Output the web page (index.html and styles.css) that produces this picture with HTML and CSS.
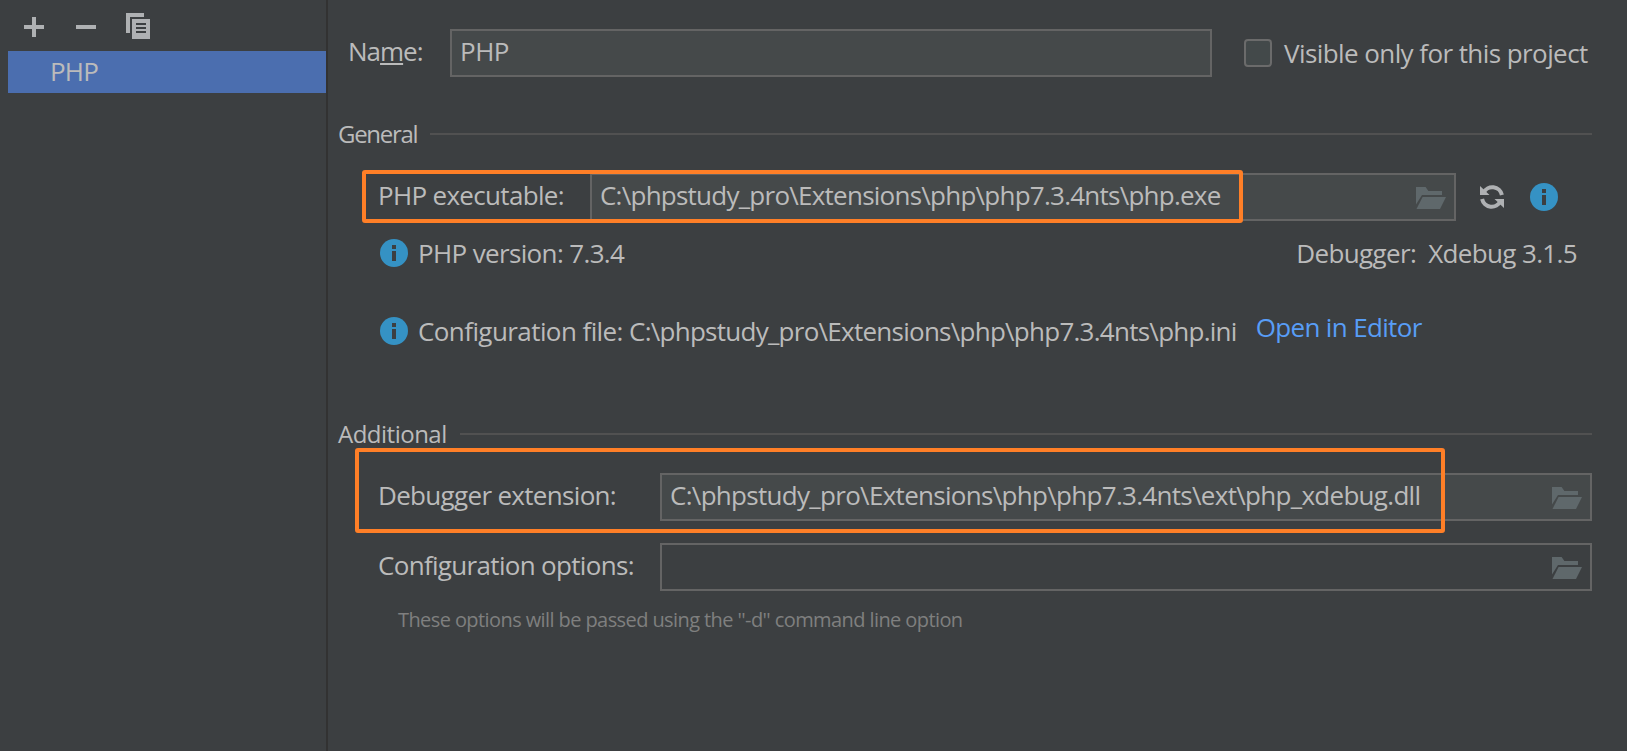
FILE: index.html
```html
<!DOCTYPE html>
<html lang="en">
<head>
<meta charset="utf-8">
<title>CLI Interpreters</title>
<link rel="stylesheet" href="styles.css">
</head>
<body>
<svg class="defs" aria-hidden="true">
  <symbol id="folder" viewBox="0 0 30 22"><path d="M0 0H9.600L12.400 4H26V8H6L0 17.500Z"/><path d="M6.600 10H30L24 22H0.500Z"/></symbol>
  <symbol id="info" viewBox="0 0 28 28"><circle cx="14" cy="14" r="14" fill="#3592c4"/><path d="M12 6h4v4h-4zM12 12h4v10h-4z" fill="#3c3f41"/></symbol>
</svg>
<div class="window">
  <aside class="sidebar">
    <div class="toolbar">
      <svg class="tool add" viewBox="0 0 20 20"><path d="M8 0h4v8h8v4h-8v8H8v-8H0V8h8z"/></svg>
      <svg class="tool remove" viewBox="0 0 20 20"><path d="M0 8h20v4H0z"/></svg>
      <svg class="tool copy" viewBox="0 0 24 26"><path d="M0 0h18v4H4v16H0z"/><path fill-rule="evenodd" d="M6 6h18v20H6zM10 10v2h10v-2zM10 14v2h10v-2zM10 18v2h10v-2z"/></svg>
    </div>
    <div class="item">PHP</div>
  </aside>
  <main class="main">
    <div class="row name-row">
      <label class="label name-label">Na<span class="mnemonic">m</span>e:</label>
      <div class="field name-field">PHP</div>
      <span class="checkbox"></span>
      <span class="label check-label">Visible only for this project</span>
    </div>
    <div class="section general"><span>General</span><i class="rule"></i></div>
    <div class="row exe-row">
      <label class="label exe-label">PHP executable:</label>
      <div class="field exe-field">C:\phpstudy_pro\Extensions\php\php7.3.4nts\php.exe<svg class="folder"><use href="#folder"/></svg></div>
      <svg class="refresh" viewBox="0 0 24 24"><path d="M3.500 7.800A9.800 9.800 0 0 1 21.900 10M20.500 16.200A9.800 9.800 0 0 1 2.100 14" fill="none" stroke="#afb1b3" stroke-width="4"/><path d="M0 1V10H9.500ZM24 23V14H14.500Z"/></svg>
      <svg class="info"><use href="#info"/></svg>
      <div class="highlight exe-highlight"></div>
    </div>
    <div class="row version-row">
      <svg class="info"><use href="#info"/></svg>
      <span class="status">PHP version: 7.3.4</span>
      <span class="debugger">Debugger:</span>
      <span class="xdebug">Xdebug 3.1.5</span>
    </div>
    <div class="row config-row">
      <svg class="info"><use href="#info"/></svg>
      <span class="status config"><span class="config-name">Configuration file: </span>C:\phpstudy_pro\Extensions\php\php7.3.4nts\php.ini</span>
      <a class="link">Open in Editor</a>
    </div>
    <div class="section additional"><span>Additional</span><i class="rule"></i></div>
    <div class="row ext-row">
      <label class="label wide-label">Debugger extension:</label>
      <div class="field wide-field">C:\phpstudy_pro\Extensions\php\php7.3.4nts\ext\php_xdebug.dll<svg class="folder"><use href="#folder"/></svg></div>
      <div class="highlight ext-highlight"></div>
    </div>
    <div class="row options-row">
      <label class="label wide-label">Configuration options:</label>
      <div class="field wide-field empty"><svg class="folder"><use href="#folder"/></svg></div>
    </div>
    <p class="hint">These options will be passed using the ''-d'' command line option</p>
  </main>
</div>
</body>
</html>
```
FILE: styles.css
```css
* { box-sizing: border-box; }
body { margin: 0; background: #3c3f41; color: #bbbbbb; font: 26px/36px "Open Sans", "Noto Sans", sans-serif; white-space: nowrap; }
svg { display: block; flex: none; fill: #afb1b3; }
.defs { display: none; }
.window { display: flex; width: 1627px; height: 751px; overflow: hidden; }

.sidebar { width: 328px; flex: none; border-right: 2px solid #323232; }
.toolbar { display: flex; height: 51px; padding: 13px 0 0 24px; align-items: flex-start; }
.tool { width: 20px; height: 20px; margin-top: 4px; }
.remove { margin-left: 32px; }
.copy { width: 24px; height: 26px; margin: 0 0 0 30px; }
.item { height: 42px; margin-left: 8px; padding: 2px 0 0 42px; background: #4b6eaf; letter-spacing: -0.8px; }

.main { flex: 1; min-width: 0; display: flex; flex-direction: column; padding: 29px 35px 0 10px; }
.row { display: flex; position: relative; flex: none; height: 48px; }
.label { flex: none; padding-top: 4px; letter-spacing: -0.68px; }
.field { display: flex; flex: none; height: 48px; padding: 2px 8px 0 8px; border: 2px solid #646464; background: #45494a; letter-spacing: -0.7px; }
.empty { background: none; }
.folder { width: 30px; height: 22px; margin: 10px 0 0 auto; fill: #5f686b; }
.info { width: 28px; height: 28px; }

.name-label { width: 112px; padding-left: 10px; letter-spacing: -1px; }
.name-field { width: 762px; letter-spacing: -0.5px; }
.mnemonic { text-decoration: underline 2px; text-underline-offset: 2px; text-decoration-skip-ink: none; }
.checkbox { flex: none; width: 28px; height: 28px; margin: 10px 12px 0 32px; border: 2px solid #6b6b6b; border-radius: 4px; background: #43494a; }
.check-label { padding-top: 6px; letter-spacing: -0.58px; }

.section { display: flex; flex: none; height: 36px; font-size: 24px; }
.rule { flex: 1; height: 2px; margin-top: 17px; background: #515151; }
.general { margin-top: 39px; letter-spacing: -1.3px; }
.general .rule { margin-left: 13px; }

.exe-row { margin-top: 21px; }
.exe-label { width: 252px; padding-left: 40px; }
.exe-field { width: 866px; letter-spacing: -0.755px; }
.refresh { width: 24px; height: 24px; margin: 12px 26px 0 24px; }
.exe-row > .info { margin-top: 10px; }
.highlight { position: absolute; border: 4px solid #ff7f27; border-radius: 3px; }
.exe-highlight { left: 24px; top: -3px; width: 881px; height: 53px; }

.version-row { height: 36px; margin-top: 14px; padding-left: 42px; letter-spacing: -0.64px; }
.config-row { height: 36px; margin-top: 42px; padding-left: 42px; }
.version-row > .info, .config-row > .info { margin-top: 4px; }
.status { flex: none; margin-left: 10px; }
.config { letter-spacing: -0.74px; }
.config-name { letter-spacing: -0.58px; }
.debugger { margin-left: auto; margin-right: 12px; }
.xdebug { margin-right: 15px; }
.link { margin: -4px 0 0 19px; color: #589df6; letter-spacing: -0.65px; }

.additional { margin-top: 67px; letter-spacing: -0.5px; }
.additional .rule { margin-left: 13px; }
.ext-row { margin-top: 21px; }
.options-row { margin-top: 22px; }
.wide-label { width: 322px; padding-left: 40px; }
.wide-field { width: 932px; }
.ext-highlight { left: 17px; top: -25px; width: 1090px; height: 85px; }
.hint { flex: none; margin: 13px 0 0 60px; font-size: 20px; line-height: 32px; color: #7f7f7f; letter-spacing: -0.59px; }
```
